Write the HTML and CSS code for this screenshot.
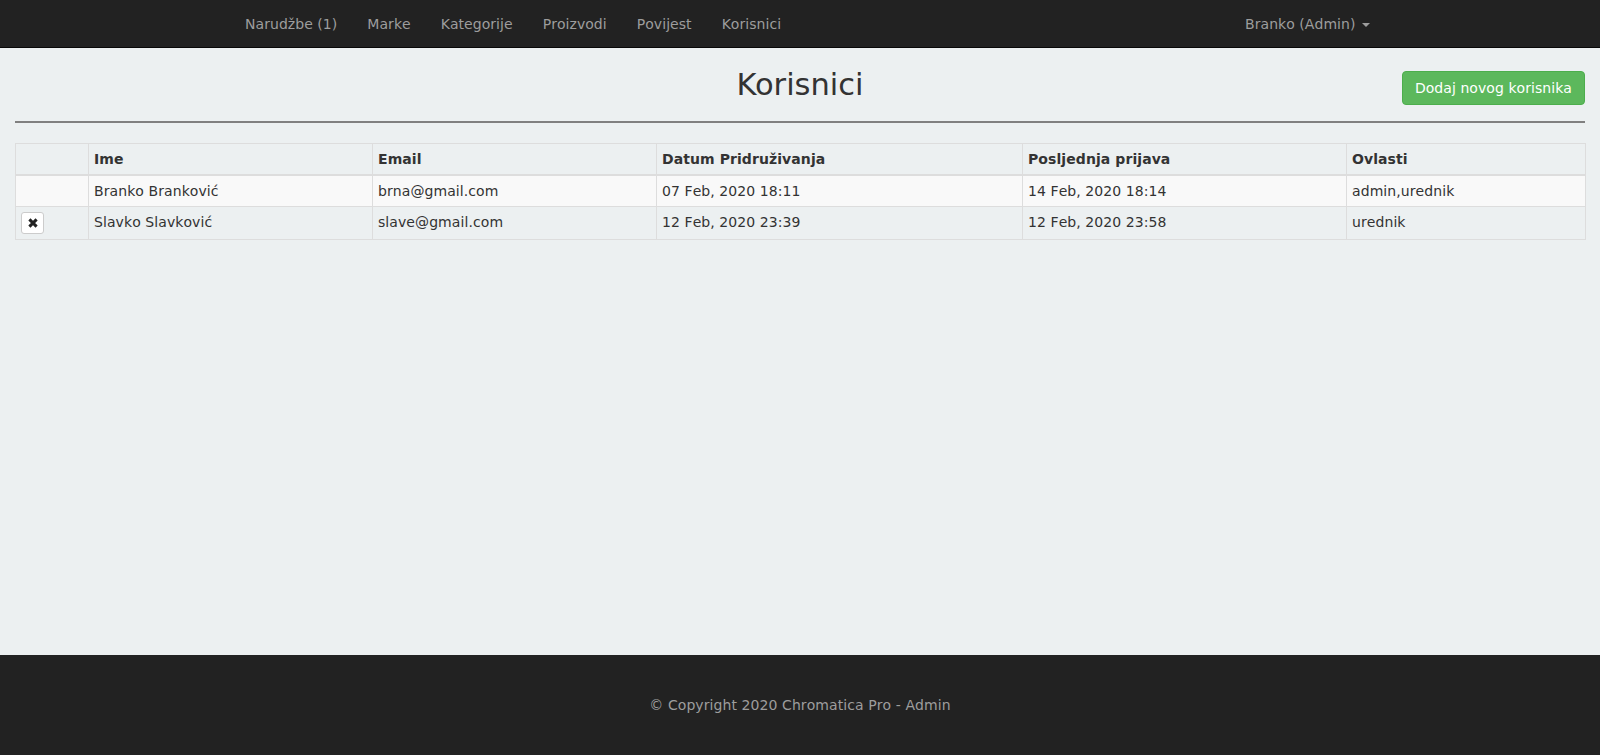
FILE: index.html
```html
<!DOCTYPE html>
<html lang="hr">
<head>
<meta charset="utf-8">
<title>Korisnici</title>
<link rel="stylesheet" href="styles.css">
</head>
<body>
<nav class="navbar">
  <div class="nav-inner">
    <ul class="nav-list">
      <li><a class="nav-link" href="#">Narudžbe (1)</a></li>
      <li><a class="nav-link" href="#">Marke</a></li>
      <li><a class="nav-link" href="#">Kategorije</a></li>
      <li><a class="nav-link" href="#">Proizvodi</a></li>
      <li><a class="nav-link" href="#">Povijest</a></li>
      <li><a class="nav-link" href="#">Korisnici</a></li>
    </ul>
    <ul class="nav-list nav-right">
      <li><a class="nav-link" href="#">Branko (Admin) <span class="caret"></span></a></li>
    </ul>
  </div>
</nav>

<main class="main">
  <div class="page-head">
    <div></div>
    <h1 class="title">Korisnici</h1>
    <a class="btn-add" href="#">Dodaj novog korisnika</a>
  </div>
  <hr class="divider">
  <table class="users">
    <colgroup>
      <col class="c-act">
      <col class="c-name">
      <col class="c-mail">
      <col class="c-join">
      <col class="c-last">
      <col class="c-role">
    </colgroup>
    <thead>
      <tr>
        <th></th>
        <th>Ime</th>
        <th>Email</th>
        <th>Datum Pridruživanja</th>
        <th>Posljednja prijava</th>
        <th>Ovlasti</th>
      </tr>
    </thead>
    <tbody>
      <tr class="odd">
        <td></td>
        <td>Branko Branković</td>
        <td>brna@gmail.com</td>
        <td>07 Feb, 2020 18:11</td>
        <td>14 Feb, 2020 18:14</td>
        <td>admin,urednik</td>
      </tr>
      <tr>
        <td><button class="btn-del" type="button" aria-label="Obriši"><svg class="x-icon" viewBox="0 0 10 10" width="10" height="10"><path d="M1.4 1.4 L8.6 8.6 M8.6 1.4 L1.4 8.6" /></svg></button></td>
        <td>Slavko Slavković</td>
        <td>slave@gmail.com</td>
        <td>12 Feb, 2020 23:39</td>
        <td>12 Feb, 2020 23:58</td>
        <td>urednik</td>
      </tr>
    </tbody>
  </table>
</main>

<footer class="footer">
  <p class="copy">© Copyright 2020 Chromatica Pro - Admin</p>
</footer>
</body>
</html>
```

FILE: styles.css
```css
html, body {
  margin: 0;
  padding: 0;
}

body {
  font-family: "DejaVu Sans", Verdana, sans-serif;
  font-size: 14px;
  line-height: 20px;
  color: #333;
  background: #ecf0f1;
  min-height: 100vh;
  display: flex;
  flex-direction: column;
  font-kerning: none;
  letter-spacing: 0.08px;
}

/* Navbar */
.navbar {
  background: #222;
  border-bottom: 1px solid #080808;
  height: 47px;
}

.nav-inner {
  width: 1170px;
  margin: 0 auto;
  padding: 0 15px;
  box-sizing: border-box;
  display: flex;
  justify-content: space-between;
}

.nav-list {
  display: flex;
  list-style: none;
  margin: 0;
  padding: 0;
}

.nav-right {
  margin-right: -15px;
}

.nav-link {
  display: block;
  padding: 14px 15px 13px;
  color: #9d9d9d;
  text-decoration: none;
  line-height: 20px;
  letter-spacing: 0.05px;
}

.caret {
  display: inline-block;
  width: 0;
  height: 0;
  margin-left: 2px;
  vertical-align: middle;
  border-top: 4px solid #9d9d9d;
  border-left: 4px solid transparent;
  border-right: 4px solid transparent;
}

/* Main */
.main {
  flex: 1;
  padding: 0 15px;
}

.page-head {
  display: grid;
  grid-template-columns: 1fr auto 1fr;
  align-items: start;
  padding-top: 20px;
}

.title {
  margin: 0;
  font-size: 30.5px;
  font-weight: 400;
  line-height: 34px;
  color: #333;
  letter-spacing: 0;
  font-kerning: normal;
}

.btn-add {
  justify-self: end;
  margin-top: 3px;
  display: inline-block;
  padding: 6px 12px;
  font-size: 14px;
  line-height: 20px;
  color: #fff;
  background: #5cb85c;
  border: 1px solid #4cae4c;
  border-radius: 4px;
  text-decoration: none;
  letter-spacing: 0.06px;
}

.divider {
  margin: 16px 0 20px;
  border: 0;
  border-top: 2px solid #808080;
  height: 0;
}

/* Table */
.users {
  width: 100%;
  table-layout: fixed;
  border-collapse: collapse;
  border: 1px solid #ddd;
}

.c-act { width: 73px; }
.c-name { width: 284px; }
.c-mail { width: 284px; }
.c-join { width: 366px; }
.c-last { width: 324px; }
.c-role { width: 239px; }

.users th,
.users td {
  padding: 5px;
  border: 1px solid #ddd;
  text-align: left;
  line-height: 20px;
  vertical-align: top;
}

.users thead th {
  border-bottom-width: 2px;
  vertical-align: bottom;
  font-weight: 700;
}

.users tr.odd td {
  background: #f9f9f9;
}

.btn-del {
  display: inline-flex;
  align-items: center;
  justify-content: center;
  width: 23px;
  height: 22px;
  padding: 0;
  margin: 0;
  background: #fff;
  border: 1px solid #ccc;
  border-radius: 3px;
  vertical-align: top;
}

.x-icon {
  display: block;
}

.x-icon path {
  stroke: #222;
  stroke-width: 3;
  stroke-linecap: butt;
  fill: none;
}

/* Footer */
.footer {
  background: #222;
  height: 100px;
  display: flex;
  align-items: center;
  justify-content: center;
}

.copy {
  margin: 0;
  color: #9d9d9d;
  line-height: 20px;
}
```
